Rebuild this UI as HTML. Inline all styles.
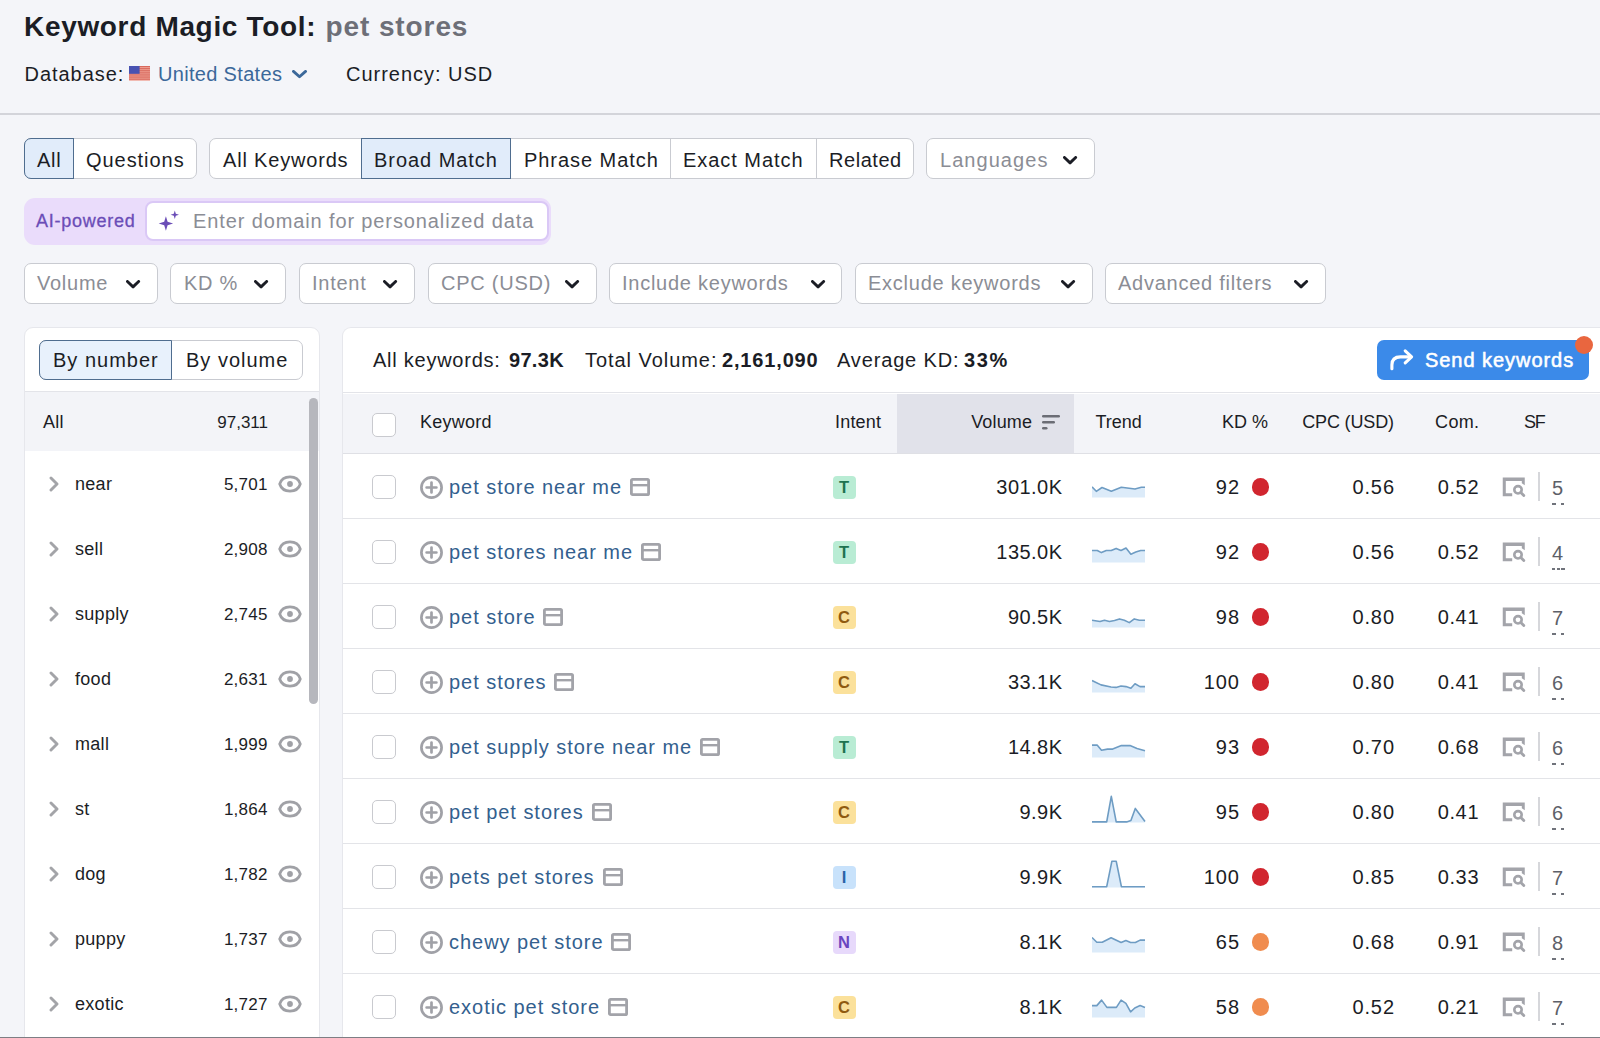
<!DOCTYPE html>
<html><head><meta charset="utf-8"><style>
html,body{margin:0;padding:0}
body{width:1600px;height:1038px;overflow:hidden;position:relative;background:#f4f5f9;font-family:"Liberation Sans", sans-serif;-webkit-font-smoothing:antialiased}
.t{position:absolute;white-space:nowrap;line-height:1;font-family:"Liberation Sans", sans-serif}
.b{position:absolute}
</style></head><body>
<div class="t" style="left:24px;top:13.30px;font-size:28px;font-weight:700;color:#1b1d25;letter-spacing:0.67px;">Keyword Magic Tool:</div>
<div class="t" style="left:325.5px;top:13.30px;font-size:28px;font-weight:700;color:#6d6f78;letter-spacing:0.9px;">pet stores</div>
<div class="t" style="left:24.5px;top:64.07px;font-size:20px;font-weight:400;color:#1b1d25;letter-spacing:0.96px;">Database:</div>
<svg class="b" style="left:129px;top:66px" width="21" height="15" viewBox="0 0 21 15"><rect x="0" y="0" width="21" height="14.7" fill="#f0a396"/><rect x="0" y="0.00" width="21" height="1.13" fill="#d8695d"/><rect x="0" y="2.10" width="21" height="1.13" fill="#d8695d"/><rect x="0" y="4.20" width="21" height="1.13" fill="#d8695d"/><rect x="0" y="6.30" width="21" height="1.13" fill="#d8695d"/><rect x="0" y="8.40" width="21" height="1.13" fill="#d8695d"/><rect x="0" y="10.50" width="21" height="1.13" fill="#d8695d"/><rect x="0" y="12.60" width="21" height="1.13" fill="#d8695d"/><rect x="0" y="0" width="10.6" height="7.8" fill="#4852b2"/></svg>
<div class="t" style="left:158px;top:64.07px;font-size:20px;font-weight:400;color:#3b689a;letter-spacing:0.32px;">United States</div>
<svg class="b" style="left:292px;top:70px" width="16" height="9.2" viewBox="0 0 16 9.2"><path d="M1.45 1.45 L7.5 6.749999999999999 L13.549999999999999 1.45" fill="none" stroke="#3b689a" stroke-width="2.9" stroke-linecap="round" stroke-linejoin="round"/></svg>
<div class="t" style="left:346px;top:64.07px;font-size:20px;font-weight:400;color:#1b1d25;letter-spacing:0.98px;">Currency: USD</div>
<div class="b" style="left:0px;top:113px;width:1600px;height:1.5px;background:#d3d4da"></div>
<div class="b" style="left:24px;top:138px;width:173px;height:41px;background:#fff;border:1px solid #c9cbd1;border-radius:7px;box-sizing:border-box"></div>
<div class="b" style="left:24px;top:138px;width:50px;height:41px;background:#e1ecfa;border:1.3px solid #4f6d8f;border-radius:7px 0 0 7px;box-sizing:border-box"></div>
<div class="t" style="left:37px;top:149.57px;font-size:20px;font-weight:400;color:#1b1d25;letter-spacing:0.7px;">All</div>
<div class="t" style="left:86px;top:149.57px;font-size:20px;font-weight:400;color:#1b1d25;letter-spacing:0.95px;">Questions</div>
<div class="b" style="left:209px;top:138px;width:705px;height:41px;background:#fff;border:1px solid #c9cbd1;border-radius:7px;box-sizing:border-box"></div>
<div class="t" style="left:223px;top:149.57px;font-size:20px;font-weight:400;color:#1b1d25;letter-spacing:0.82px;">All Keywords</div>
<div class="b" style="left:361px;top:138px;width:150px;height:41px;background:#e1ecfa;border:1.3px solid #4f6d8f;border-radius:0 0 0 0;box-sizing:border-box"></div>
<div class="t" style="left:374px;top:149.57px;font-size:20px;font-weight:400;color:#1b1d25;letter-spacing:0.95px;">Broad Match</div>
<div class="t" style="left:524px;top:149.57px;font-size:20px;font-weight:400;color:#1b1d25;letter-spacing:0.95px;">Phrase Match</div>
<div class="t" style="left:683px;top:149.57px;font-size:20px;font-weight:400;color:#1b1d25;letter-spacing:0.95px;">Exact Match</div>
<div class="t" style="left:829px;top:149.57px;font-size:20px;font-weight:400;color:#1b1d25;letter-spacing:0.55px;">Related</div>
<div class="b" style="left:670px;top:139px;width:1.2000000000000455px;height:39px;background:#c9cbd1"></div>
<div class="b" style="left:815.5px;top:139px;width:1.2000000000000455px;height:39px;background:#c9cbd1"></div>
<div class="b" style="left:73px;top:138px;width:1.2999999999999972px;height:41px;background:#4f6d8f"></div>
<div class="b" style="left:926px;top:138px;width:169px;height:41px;background:#fff;border:1px solid #c9cbd1;border-radius:7px;box-sizing:border-box"></div>
<div class="t" style="left:940px;top:149.57px;font-size:20px;font-weight:400;color:#8b8d95;letter-spacing:1.05px;">Languages</div>
<svg class="b" style="left:1063.4px;top:156.2px" width="15.1" height="9.3" viewBox="0 0 15.1 9.3"><path d="M1.45 1.45 L7.05 6.8500000000000005 L12.649999999999999 1.45" fill="none" stroke="#1b1d25" stroke-width="2.9" stroke-linecap="round" stroke-linejoin="round"/></svg>
<div class="b" style="left:24px;top:197.5px;width:526.5px;height:47.0px;background:#eadcfb;border-radius:11px"></div>
<div class="b" style="left:145px;top:200.5px;width:404px;height:40.0px;background:#fff;border:2px solid #dac8f6;border-radius:8px;box-sizing:border-box"></div>
<div class="t" style="left:36px;top:211.76px;font-size:18px;font-weight:400;color:#6b4db7;letter-spacing:0.75px;-webkit-text-stroke:0.3px #6b4db7">AI-powered</div>
<svg class="b" style="left:156px;top:210px" width="24" height="24" viewBox="0 0 24 24"><path d="M9.9 6.3 L11.6 11.8 L17.1 13.5 L11.6 15.2 L9.9 20.7 L8.2 15.2 L2.7 13.5 L8.2 11.8Z" fill="#6b4db7"/><path d="M18.8 0.6 L19.8 3.8 L23 4.8 L19.8 5.8 L18.8 9 L17.8 5.8 L14.6 4.8 L17.8 3.8Z" fill="#6b4db7"/></svg>
<div class="t" style="left:193px;top:210.57px;font-size:20px;font-weight:400;color:#8b8d95;letter-spacing:0.88px;">Enter domain for personalized data</div>
<div class="b" style="left:24px;top:262.5px;width:134px;height:41.0px;background:#fff;border:1px solid #c9cbd1;border-radius:7px;box-sizing:border-box"></div>
<div class="t" style="left:37px;top:273.07px;font-size:20px;font-weight:400;color:#8b8d95;letter-spacing:0.75px;">Volume</div>
<svg class="b" style="left:126.3px;top:279.8px" width="15.1" height="9.3" viewBox="0 0 15.1 9.3"><path d="M1.45 1.45 L7.05 6.8500000000000005 L12.649999999999999 1.45" fill="none" stroke="#1b1d25" stroke-width="2.9" stroke-linecap="round" stroke-linejoin="round"/></svg>
<div class="b" style="left:170px;top:262.5px;width:116px;height:41.0px;background:#fff;border:1px solid #c9cbd1;border-radius:7px;box-sizing:border-box"></div>
<div class="t" style="left:184px;top:273.07px;font-size:20px;font-weight:400;color:#8b8d95;letter-spacing:0.75px;">KD %</div>
<svg class="b" style="left:254.3px;top:279.8px" width="15.1" height="9.3" viewBox="0 0 15.1 9.3"><path d="M1.45 1.45 L7.05 6.8500000000000005 L12.649999999999999 1.45" fill="none" stroke="#1b1d25" stroke-width="2.9" stroke-linecap="round" stroke-linejoin="round"/></svg>
<div class="b" style="left:299px;top:262.5px;width:116px;height:41.0px;background:#fff;border:1px solid #c9cbd1;border-radius:7px;box-sizing:border-box"></div>
<div class="t" style="left:312px;top:273.07px;font-size:20px;font-weight:400;color:#8b8d95;letter-spacing:0.75px;">Intent</div>
<svg class="b" style="left:382.8px;top:279.8px" width="15.1" height="9.3" viewBox="0 0 15.1 9.3"><path d="M1.45 1.45 L7.05 6.8500000000000005 L12.649999999999999 1.45" fill="none" stroke="#1b1d25" stroke-width="2.9" stroke-linecap="round" stroke-linejoin="round"/></svg>
<div class="b" style="left:428px;top:262.5px;width:169px;height:41.0px;background:#fff;border:1px solid #c9cbd1;border-radius:7px;box-sizing:border-box"></div>
<div class="t" style="left:441px;top:273.07px;font-size:20px;font-weight:400;color:#8b8d95;letter-spacing:0.75px;">CPC (USD)</div>
<svg class="b" style="left:564.8px;top:279.8px" width="15.1" height="9.3" viewBox="0 0 15.1 9.3"><path d="M1.45 1.45 L7.05 6.8500000000000005 L12.649999999999999 1.45" fill="none" stroke="#1b1d25" stroke-width="2.9" stroke-linecap="round" stroke-linejoin="round"/></svg>
<div class="b" style="left:609px;top:262.5px;width:233px;height:41.0px;background:#fff;border:1px solid #c9cbd1;border-radius:7px;box-sizing:border-box"></div>
<div class="t" style="left:622px;top:273.07px;font-size:20px;font-weight:400;color:#8b8d95;letter-spacing:0.75px;">Include keywords</div>
<svg class="b" style="left:810.8px;top:279.8px" width="15.1" height="9.3" viewBox="0 0 15.1 9.3"><path d="M1.45 1.45 L7.05 6.8500000000000005 L12.649999999999999 1.45" fill="none" stroke="#1b1d25" stroke-width="2.9" stroke-linecap="round" stroke-linejoin="round"/></svg>
<div class="b" style="left:855px;top:262.5px;width:238px;height:41.0px;background:#fff;border:1px solid #c9cbd1;border-radius:7px;box-sizing:border-box"></div>
<div class="t" style="left:868px;top:273.07px;font-size:20px;font-weight:400;color:#8b8d95;letter-spacing:0.75px;">Exclude keywords</div>
<svg class="b" style="left:1061.3px;top:279.8px" width="15.1" height="9.3" viewBox="0 0 15.1 9.3"><path d="M1.45 1.45 L7.05 6.8500000000000005 L12.649999999999999 1.45" fill="none" stroke="#1b1d25" stroke-width="2.9" stroke-linecap="round" stroke-linejoin="round"/></svg>
<div class="b" style="left:1105px;top:262.5px;width:221px;height:41.0px;background:#fff;border:1px solid #c9cbd1;border-radius:7px;box-sizing:border-box"></div>
<div class="t" style="left:1118px;top:273.07px;font-size:20px;font-weight:400;color:#8b8d95;letter-spacing:0.75px;">Advanced filters</div>
<svg class="b" style="left:1294.3px;top:279.8px" width="15.1" height="9.3" viewBox="0 0 15.1 9.3"><path d="M1.45 1.45 L7.05 6.8500000000000005 L12.649999999999999 1.45" fill="none" stroke="#1b1d25" stroke-width="2.9" stroke-linecap="round" stroke-linejoin="round"/></svg>
<div class="b" style="left:23.5px;top:327px;width:296.0px;height:713px;background:#fff;border:1px solid #e6e7ec;border-radius:9px 9px 0 0;box-sizing:border-box"></div>
<div class="b" style="left:39px;top:340px;width:264px;height:40px;background:#fff;border:1px solid #c9cbd1;border-radius:7px;box-sizing:border-box"></div>
<div class="b" style="left:39px;top:340px;width:133px;height:40px;background:#e8f1fc;border:1.3px solid #4f6d8f;border-radius:7px 0 0 7px;box-sizing:border-box"></div>
<div class="t" style="left:53px;top:350.07px;font-size:20px;font-weight:400;color:#1b1d25;letter-spacing:1.0px;">By number</div>
<div class="t" style="left:186px;top:350.07px;font-size:20px;font-weight:400;color:#1b1d25;letter-spacing:1.0px;">By volume</div>
<div class="b" style="left:24.5px;top:390.5px;width:294.5px;height:1.3000000000000114px;background:#e3e4e9"></div>
<div class="b" style="left:24.5px;top:391.8px;width:294.5px;height:59.19999999999999px;background:#f3f4f8"></div>
<div class="t" style="left:43px;top:412.76px;font-size:18px;font-weight:400;color:#1b1d25;letter-spacing:0.3px;">All</div>
<div class="t" style="right:1332px;text-align:right;top:413.61px;font-size:17px;font-weight:400;color:#1b1d25;letter-spacing:0px;">97,311</div>
<div class="b" style="left:309px;top:398px;width:9px;height:306px;background:#b6b7bd;border-radius:5px"></div>
<svg class="b" style="left:48.4px;top:476.4px" width="12" height="16" viewBox="0 0 12 16"><path d="M3 2 L9 8 L3 14" fill="none" stroke="#a3a4a8" stroke-width="2.9" stroke-linecap="round" stroke-linejoin="round"/></svg>
<div class="t" style="left:75px;top:475.26px;font-size:18px;font-weight:400;color:#1b1d25;letter-spacing:0.3px;">near</div>
<div class="t" style="right:1332.23px;text-align:right;top:476.11px;font-size:17px;font-weight:400;color:#1b1d25;letter-spacing:0.27px;">5,701</div>
<svg class="b" style="left:278px;top:474px" width="24" height="20" viewBox="0 0 24 20"><path d="M1.7 10 C4.6 0.6 19.4 0.6 22.3 10 C19.4 19.4 4.6 19.4 1.7 10Z" fill="none" stroke="#a0a1a6" stroke-width="2.7" stroke-linejoin="round"/><circle cx="12" cy="10" r="2.9" fill="#a0a1a6"/></svg>
<svg class="b" style="left:48.4px;top:541.4px" width="12" height="16" viewBox="0 0 12 16"><path d="M3 2 L9 8 L3 14" fill="none" stroke="#a3a4a8" stroke-width="2.9" stroke-linecap="round" stroke-linejoin="round"/></svg>
<div class="t" style="left:75px;top:540.26px;font-size:18px;font-weight:400;color:#1b1d25;letter-spacing:0.3px;">sell</div>
<div class="t" style="right:1332.23px;text-align:right;top:541.11px;font-size:17px;font-weight:400;color:#1b1d25;letter-spacing:0.27px;">2,908</div>
<svg class="b" style="left:278px;top:539px" width="24" height="20" viewBox="0 0 24 20"><path d="M1.7 10 C4.6 0.6 19.4 0.6 22.3 10 C19.4 19.4 4.6 19.4 1.7 10Z" fill="none" stroke="#a0a1a6" stroke-width="2.7" stroke-linejoin="round"/><circle cx="12" cy="10" r="2.9" fill="#a0a1a6"/></svg>
<svg class="b" style="left:48.4px;top:606.4px" width="12" height="16" viewBox="0 0 12 16"><path d="M3 2 L9 8 L3 14" fill="none" stroke="#a3a4a8" stroke-width="2.9" stroke-linecap="round" stroke-linejoin="round"/></svg>
<div class="t" style="left:75px;top:605.26px;font-size:18px;font-weight:400;color:#1b1d25;letter-spacing:0.3px;">supply</div>
<div class="t" style="right:1332.23px;text-align:right;top:606.11px;font-size:17px;font-weight:400;color:#1b1d25;letter-spacing:0.27px;">2,745</div>
<svg class="b" style="left:278px;top:604px" width="24" height="20" viewBox="0 0 24 20"><path d="M1.7 10 C4.6 0.6 19.4 0.6 22.3 10 C19.4 19.4 4.6 19.4 1.7 10Z" fill="none" stroke="#a0a1a6" stroke-width="2.7" stroke-linejoin="round"/><circle cx="12" cy="10" r="2.9" fill="#a0a1a6"/></svg>
<svg class="b" style="left:48.4px;top:671.4px" width="12" height="16" viewBox="0 0 12 16"><path d="M3 2 L9 8 L3 14" fill="none" stroke="#a3a4a8" stroke-width="2.9" stroke-linecap="round" stroke-linejoin="round"/></svg>
<div class="t" style="left:75px;top:670.26px;font-size:18px;font-weight:400;color:#1b1d25;letter-spacing:0.3px;">food</div>
<div class="t" style="right:1332.23px;text-align:right;top:671.11px;font-size:17px;font-weight:400;color:#1b1d25;letter-spacing:0.27px;">2,631</div>
<svg class="b" style="left:278px;top:669px" width="24" height="20" viewBox="0 0 24 20"><path d="M1.7 10 C4.6 0.6 19.4 0.6 22.3 10 C19.4 19.4 4.6 19.4 1.7 10Z" fill="none" stroke="#a0a1a6" stroke-width="2.7" stroke-linejoin="round"/><circle cx="12" cy="10" r="2.9" fill="#a0a1a6"/></svg>
<svg class="b" style="left:48.4px;top:736.4px" width="12" height="16" viewBox="0 0 12 16"><path d="M3 2 L9 8 L3 14" fill="none" stroke="#a3a4a8" stroke-width="2.9" stroke-linecap="round" stroke-linejoin="round"/></svg>
<div class="t" style="left:75px;top:735.26px;font-size:18px;font-weight:400;color:#1b1d25;letter-spacing:0.3px;">mall</div>
<div class="t" style="right:1332.23px;text-align:right;top:736.11px;font-size:17px;font-weight:400;color:#1b1d25;letter-spacing:0.27px;">1,999</div>
<svg class="b" style="left:278px;top:734px" width="24" height="20" viewBox="0 0 24 20"><path d="M1.7 10 C4.6 0.6 19.4 0.6 22.3 10 C19.4 19.4 4.6 19.4 1.7 10Z" fill="none" stroke="#a0a1a6" stroke-width="2.7" stroke-linejoin="round"/><circle cx="12" cy="10" r="2.9" fill="#a0a1a6"/></svg>
<svg class="b" style="left:48.4px;top:801.4px" width="12" height="16" viewBox="0 0 12 16"><path d="M3 2 L9 8 L3 14" fill="none" stroke="#a3a4a8" stroke-width="2.9" stroke-linecap="round" stroke-linejoin="round"/></svg>
<div class="t" style="left:75px;top:800.26px;font-size:18px;font-weight:400;color:#1b1d25;letter-spacing:0.3px;">st</div>
<div class="t" style="right:1332.23px;text-align:right;top:801.11px;font-size:17px;font-weight:400;color:#1b1d25;letter-spacing:0.27px;">1,864</div>
<svg class="b" style="left:278px;top:799px" width="24" height="20" viewBox="0 0 24 20"><path d="M1.7 10 C4.6 0.6 19.4 0.6 22.3 10 C19.4 19.4 4.6 19.4 1.7 10Z" fill="none" stroke="#a0a1a6" stroke-width="2.7" stroke-linejoin="round"/><circle cx="12" cy="10" r="2.9" fill="#a0a1a6"/></svg>
<svg class="b" style="left:48.4px;top:866.4px" width="12" height="16" viewBox="0 0 12 16"><path d="M3 2 L9 8 L3 14" fill="none" stroke="#a3a4a8" stroke-width="2.9" stroke-linecap="round" stroke-linejoin="round"/></svg>
<div class="t" style="left:75px;top:865.26px;font-size:18px;font-weight:400;color:#1b1d25;letter-spacing:0.3px;">dog</div>
<div class="t" style="right:1332.23px;text-align:right;top:866.11px;font-size:17px;font-weight:400;color:#1b1d25;letter-spacing:0.27px;">1,782</div>
<svg class="b" style="left:278px;top:864px" width="24" height="20" viewBox="0 0 24 20"><path d="M1.7 10 C4.6 0.6 19.4 0.6 22.3 10 C19.4 19.4 4.6 19.4 1.7 10Z" fill="none" stroke="#a0a1a6" stroke-width="2.7" stroke-linejoin="round"/><circle cx="12" cy="10" r="2.9" fill="#a0a1a6"/></svg>
<svg class="b" style="left:48.4px;top:931.4px" width="12" height="16" viewBox="0 0 12 16"><path d="M3 2 L9 8 L3 14" fill="none" stroke="#a3a4a8" stroke-width="2.9" stroke-linecap="round" stroke-linejoin="round"/></svg>
<div class="t" style="left:75px;top:930.26px;font-size:18px;font-weight:400;color:#1b1d25;letter-spacing:0.3px;">puppy</div>
<div class="t" style="right:1332.23px;text-align:right;top:931.11px;font-size:17px;font-weight:400;color:#1b1d25;letter-spacing:0.27px;">1,737</div>
<svg class="b" style="left:278px;top:929px" width="24" height="20" viewBox="0 0 24 20"><path d="M1.7 10 C4.6 0.6 19.4 0.6 22.3 10 C19.4 19.4 4.6 19.4 1.7 10Z" fill="none" stroke="#a0a1a6" stroke-width="2.7" stroke-linejoin="round"/><circle cx="12" cy="10" r="2.9" fill="#a0a1a6"/></svg>
<svg class="b" style="left:48.4px;top:996.4px" width="12" height="16" viewBox="0 0 12 16"><path d="M3 2 L9 8 L3 14" fill="none" stroke="#a3a4a8" stroke-width="2.9" stroke-linecap="round" stroke-linejoin="round"/></svg>
<div class="t" style="left:75px;top:995.26px;font-size:18px;font-weight:400;color:#1b1d25;letter-spacing:0.3px;">exotic</div>
<div class="t" style="right:1332.23px;text-align:right;top:996.11px;font-size:17px;font-weight:400;color:#1b1d25;letter-spacing:0.27px;">1,727</div>
<svg class="b" style="left:278px;top:994px" width="24" height="20" viewBox="0 0 24 20"><path d="M1.7 10 C4.6 0.6 19.4 0.6 22.3 10 C19.4 19.4 4.6 19.4 1.7 10Z" fill="none" stroke="#a0a1a6" stroke-width="2.7" stroke-linejoin="round"/><circle cx="12" cy="10" r="2.9" fill="#a0a1a6"/></svg>
<div class="b" style="left:342px;top:327px;width:1258px;height:713px;background:#fff;border:1px solid #e6e7ec;border-right:none;border-radius:9px 0 0 0;box-sizing:border-box"></div>
<div class="t" style="left:373px;top:350.07px;font-size:20px;font-weight:400;color:#1b1d25;letter-spacing:0.75px;">All keywords: </div>
<div class="t" style="left:509px;top:350.07px;font-size:20px;font-weight:700;color:#1b1d25;letter-spacing:0.3px;">97.3K</div>
<div class="t" style="left:585px;top:350.07px;font-size:20px;font-weight:400;color:#1b1d25;letter-spacing:0.95px;">Total Volume: </div>
<div class="t" style="left:722px;top:350.07px;font-size:20px;font-weight:700;color:#1b1d25;letter-spacing:0.84px;">2,161,090</div>
<div class="t" style="left:837px;top:350.07px;font-size:20px;font-weight:400;color:#1b1d25;letter-spacing:0.85px;">Average KD: </div>
<div class="t" style="left:964px;top:350.07px;font-size:20px;font-weight:700;color:#1b1d25;letter-spacing:1.6px;">33%</div>
<div class="b" style="left:1377px;top:339.5px;width:212px;height:40.5px;background:#3b8ae9;border-radius:7px"></div>
<svg class="b" style="left:1388px;top:348px" width="26" height="24" viewBox="0 0 26 24"><path d="M3.9 20.8 V17 Q3.9 8.9 12.5 8.9 H22.5" fill="none" stroke="#fff" stroke-width="3.1" stroke-linecap="round"/><path d="M17.2 2.9 L23.6 8.9 L17.2 14.9" fill="none" stroke="#fff" stroke-width="3.1" stroke-linecap="round" stroke-linejoin="round"/></svg>
<div class="t" style="left:1425px;top:349.57px;font-size:20px;font-weight:400;color:#fff;letter-spacing:0.95px;-webkit-text-stroke:0.55px #fff">Send keywords</div>
<div class="b" style="left:1574.5px;top:336px;width:18px;height:18px;border-radius:50%;background:#e9663f"></div>
<div class="b" style="left:343px;top:392.2px;width:1257px;height:1.3000000000000114px;background:#e3e4e9"></div>
<div class="b" style="left:343px;top:393.5px;width:1257px;height:59.5px;background:#f3f4f8"></div>
<div class="b" style="left:897px;top:393.5px;width:177px;height:59.5px;background:#e1e2ea"></div>
<div class="b" style="left:343px;top:453px;width:1257px;height:1.3000000000000114px;background:#dfe0e5"></div>
<div class="b" style="left:372px;top:413px;width:23.5px;height:23.5px;background:#fff;border:1.3px solid #c9cacf;border-radius:5px;box-sizing:border-box"></div>
<div class="t" style="left:420px;top:413.06px;font-size:18px;font-weight:400;color:#1b1d25;letter-spacing:0.25px;">Keyword</div>
<div class="t" style="left:835px;top:413.06px;font-size:18px;font-weight:400;color:#1b1d25;letter-spacing:0.2px;">Intent</div>
<div class="t" style="right:567.85px;text-align:right;top:413.06px;font-size:18px;font-weight:400;color:#1b1d25;letter-spacing:0.15px;">Volume</div>
<svg class="b" style="left:1041px;top:414px" width="20" height="16" viewBox="0 0 20 16"><rect x="1" y="1" width="18" height="2.6" rx="1.3" fill="#6b6d75"/><rect x="1" y="7" width="13" height="2.6" rx="1.3" fill="#6b6d75"/><rect x="1" y="13" width="5.5" height="2.6" rx="1.3" fill="#6b6d75"/></svg>
<div class="t" style="left:1095.5px;top:413.06px;font-size:18px;font-weight:400;color:#1b1d25;letter-spacing:0px;">Trend</div>
<div class="t" style="right:332px;text-align:right;top:413.06px;font-size:18px;font-weight:400;color:#1b1d25;letter-spacing:0px;">KD %</div>
<div class="t" style="right:206.15px;text-align:right;top:413.06px;font-size:18px;font-weight:400;color:#1b1d25;letter-spacing:-0.15px;">CPC (USD)</div>
<div class="t" style="right:120.7px;text-align:right;top:413.06px;font-size:18px;font-weight:400;color:#1b1d25;letter-spacing:0.3px;">Com.</div>
<div class="t" style="left:1524px;top:413.06px;font-size:18px;font-weight:400;color:#1b1d25;letter-spacing:-1.2px;">SF</div>
<div class="b" style="left:372px;top:475px;width:23.5px;height:23.5px;background:#fff;border:1.3px solid #c9cacf;border-radius:5px;box-sizing:border-box"></div>
<svg class="b" style="left:419px;top:475px" width="25" height="25" viewBox="0 0 25 25"><circle cx="12.5" cy="12.5" r="10.1" fill="none" stroke="#a0a1a7" stroke-width="2.7"/><path d="M12.5 7.6 V17.4 M7.6 12.5 H17.4" stroke="#a0a1a7" stroke-width="2.7" stroke-linecap="round"/></svg>
<div class="t kw" style="left:449px;top:477.07px;font-size:20px;color:#33608e;letter-spacing:0.96px">pet store near me<svg style="display:inline-block;vertical-align:-2px;margin-left:8px" width="20" height="18" viewBox="0 0 20 18"><rect x="1.4" y="1.4" width="17.2" height="15.2" rx="1.2" fill="none" stroke="#a2a3a9" stroke-width="2.8"/><path d="M1.5 7.2 H18.5" stroke="#a2a3a9" stroke-width="2.4"/></svg></div>
<div class="b" style="left:832.5px;top:475.5px;width:23px;height:23px;border-radius:4px;background:#b9ecd4;color:#1f7250;font-weight:700;font-size:16.5px;line-height:23px;text-align:center;font-family:"Liberation Sans", sans-serif">T</div>
<div class="t" style="right:537.55px;text-align:right;top:477.07px;font-size:20px;font-weight:400;color:#1b1d25;letter-spacing:0.45px;">301.0K</div>
<svg class="b" style="left:1092px;top:467px" width="54" height="32" viewBox="0 -12 54 32"><polygon points="0,18.5 0.0,7.9 4.3,12.3 10.0,8.5 19.3,12.3 29.3,8.3 43.0,10.0 49.3,8.3 53.0,8.3 53,18.5" fill="#dcebf9"/><polyline points="0.0,7.9 4.3,12.3 10.0,8.5 19.3,12.3 29.3,8.3 43.0,10.0 49.3,8.3 53.0,8.3" fill="none" stroke="#6e9cc3" stroke-width="1.6" stroke-linejoin="round"/></svg>
<div class="t" style="right:360.1px;text-align:right;top:477.07px;font-size:20px;font-weight:400;color:#1b1d25;letter-spacing:0.9px;">92</div>
<div class="b" style="left:1251.5px;top:478px;width:17.5px;height:17.5px;border-radius:50%;background:#d1262f"></div>
<div class="t" style="right:205.1px;text-align:right;top:477.07px;font-size:20px;font-weight:400;color:#1b1d25;letter-spacing:0.9px;">0.56</div>
<div class="t" style="right:120.85px;text-align:right;top:477.07px;font-size:20px;font-weight:400;color:#1b1d25;letter-spacing:0.65px;">0.52</div>
<svg class="b" style="left:1502px;top:477px" width="24" height="20" viewBox="0 0 24 20"><path d="M0.75 0.5 H22.75 V8.2 L19.8 6.2 V3.9 H3.8 V16.2 H10.2 V19.2 H0.75Z" fill="#a3a4aa"/><circle cx="16" cy="12.8" r="3.7" fill="none" stroke="#a3a4aa" stroke-width="2.6"/><path d="M18.8 15.6 L21.8 18.6" stroke="#a3a4aa" stroke-width="2.8" stroke-linecap="round"/></svg>
<div class="b" style="left:1538.3px;top:472px;width:1.5px;height:29px;background:#d6d7db"></div>
<div class="t" style="left:1552px;top:478.07px;font-size:20px;font-weight:400;color:#5d6068;letter-spacing:0px;">5</div>
<div class="b" style="left:1551.8px;top:503px;width:3.7999999999999545px;height:1.6000000000000227px;background:#70737b"></div>
<div class="b" style="left:1560.5px;top:503px;width:3.7999999999999545px;height:1.6000000000000227px;background:#70737b"></div>
<div class="b" style="left:343px;top:518px;width:1257px;height:1.2999999999999545px;background:#e3e4e8"></div>
<div class="b" style="left:372px;top:540px;width:23.5px;height:23.5px;background:#fff;border:1.3px solid #c9cacf;border-radius:5px;box-sizing:border-box"></div>
<svg class="b" style="left:419px;top:540px" width="25" height="25" viewBox="0 0 25 25"><circle cx="12.5" cy="12.5" r="10.1" fill="none" stroke="#a0a1a7" stroke-width="2.7"/><path d="M12.5 7.6 V17.4 M7.6 12.5 H17.4" stroke="#a0a1a7" stroke-width="2.7" stroke-linecap="round"/></svg>
<div class="t kw" style="left:449px;top:542.07px;font-size:20px;color:#33608e;letter-spacing:0.96px">pet stores near me<svg style="display:inline-block;vertical-align:-2px;margin-left:8px" width="20" height="18" viewBox="0 0 20 18"><rect x="1.4" y="1.4" width="17.2" height="15.2" rx="1.2" fill="none" stroke="#a2a3a9" stroke-width="2.8"/><path d="M1.5 7.2 H18.5" stroke="#a2a3a9" stroke-width="2.4"/></svg></div>
<div class="b" style="left:832.5px;top:540.5px;width:23px;height:23px;border-radius:4px;background:#b9ecd4;color:#1f7250;font-weight:700;font-size:16.5px;line-height:23px;text-align:center;font-family:"Liberation Sans", sans-serif">T</div>
<div class="t" style="right:537.55px;text-align:right;top:542.07px;font-size:20px;font-weight:400;color:#1b1d25;letter-spacing:0.45px;">135.0K</div>
<svg class="b" style="left:1092px;top:532px" width="54" height="32" viewBox="0 -12 54 32"><polygon points="0,18.5 0.0,6.5 5.3,6.5 9.4,8.6 14.3,6.5 19.2,6.5 24.1,4.4 29.0,6.5 34.0,4.0 38.9,10.3 43.8,8.1 48.7,6.5 53.0,6.5 53,18.5" fill="#dcebf9"/><polyline points="0.0,6.5 5.3,6.5 9.4,8.6 14.3,6.5 19.2,6.5 24.1,4.4 29.0,6.5 34.0,4.0 38.9,10.3 43.8,8.1 48.7,6.5 53.0,6.5" fill="none" stroke="#6e9cc3" stroke-width="1.6" stroke-linejoin="round"/></svg>
<div class="t" style="right:360.1px;text-align:right;top:542.07px;font-size:20px;font-weight:400;color:#1b1d25;letter-spacing:0.9px;">92</div>
<div class="b" style="left:1251.5px;top:543px;width:17.5px;height:17.5px;border-radius:50%;background:#d1262f"></div>
<div class="t" style="right:205.1px;text-align:right;top:542.07px;font-size:20px;font-weight:400;color:#1b1d25;letter-spacing:0.9px;">0.56</div>
<div class="t" style="right:120.85px;text-align:right;top:542.07px;font-size:20px;font-weight:400;color:#1b1d25;letter-spacing:0.65px;">0.52</div>
<svg class="b" style="left:1502px;top:542px" width="24" height="20" viewBox="0 0 24 20"><path d="M0.75 0.5 H22.75 V8.2 L19.8 6.2 V3.9 H3.8 V16.2 H10.2 V19.2 H0.75Z" fill="#a3a4aa"/><circle cx="16" cy="12.8" r="3.7" fill="none" stroke="#a3a4aa" stroke-width="2.6"/><path d="M18.8 15.6 L21.8 18.6" stroke="#a3a4aa" stroke-width="2.8" stroke-linecap="round"/></svg>
<div class="b" style="left:1538.3px;top:537px;width:1.5px;height:29px;background:#d6d7db"></div>
<div class="t" style="left:1552px;top:543.07px;font-size:20px;font-weight:400;color:#5d6068;letter-spacing:0px;">4</div>
<div class="b" style="left:1551.5px;top:568px;width:3.5px;height:1.5px;background:#70737b"></div>
<div class="b" style="left:1556.5px;top:568px;width:3.5px;height:1.5px;background:#70737b"></div>
<div class="b" style="left:1561.3px;top:568px;width:3.5px;height:1.5px;background:#70737b"></div>
<div class="b" style="left:343px;top:583px;width:1257px;height:1.2999999999999545px;background:#e3e4e8"></div>
<div class="b" style="left:372px;top:605px;width:23.5px;height:23.5px;background:#fff;border:1.3px solid #c9cacf;border-radius:5px;box-sizing:border-box"></div>
<svg class="b" style="left:419px;top:605px" width="25" height="25" viewBox="0 0 25 25"><circle cx="12.5" cy="12.5" r="10.1" fill="none" stroke="#a0a1a7" stroke-width="2.7"/><path d="M12.5 7.6 V17.4 M7.6 12.5 H17.4" stroke="#a0a1a7" stroke-width="2.7" stroke-linecap="round"/></svg>
<div class="t kw" style="left:449px;top:607.07px;font-size:20px;color:#33608e;letter-spacing:0.96px">pet store<svg style="display:inline-block;vertical-align:-2px;margin-left:8px" width="20" height="18" viewBox="0 0 20 18"><rect x="1.4" y="1.4" width="17.2" height="15.2" rx="1.2" fill="none" stroke="#a2a3a9" stroke-width="2.8"/><path d="M1.5 7.2 H18.5" stroke="#a2a3a9" stroke-width="2.4"/></svg></div>
<div class="b" style="left:832.5px;top:605.5px;width:23px;height:23px;border-radius:4px;background:#fbe19b;color:#8f5a10;font-weight:700;font-size:16.5px;line-height:23px;text-align:center;font-family:"Liberation Sans", sans-serif">C</div>
<div class="t" style="right:537.55px;text-align:right;top:607.07px;font-size:20px;font-weight:400;color:#1b1d25;letter-spacing:0.45px;">90.5K</div>
<svg class="b" style="left:1092px;top:597px" width="54" height="32" viewBox="0 -12 54 32"><polygon points="0,18.5 0.0,11.2 8.0,12.5 12.5,11.2 17.5,12.5 22.5,11.5 27.5,9.9 32.3,11.2 37.3,13.6 42.3,9.9 47.3,11.2 53.0,11.2 53,18.5" fill="#dcebf9"/><polyline points="0.0,11.2 8.0,12.5 12.5,11.2 17.5,12.5 22.5,11.5 27.5,9.9 32.3,11.2 37.3,13.6 42.3,9.9 47.3,11.2 53.0,11.2" fill="none" stroke="#6e9cc3" stroke-width="1.6" stroke-linejoin="round"/></svg>
<div class="t" style="right:360.1px;text-align:right;top:607.07px;font-size:20px;font-weight:400;color:#1b1d25;letter-spacing:0.9px;">98</div>
<div class="b" style="left:1251.5px;top:608px;width:17.5px;height:17.5px;border-radius:50%;background:#d1262f"></div>
<div class="t" style="right:205.1px;text-align:right;top:607.07px;font-size:20px;font-weight:400;color:#1b1d25;letter-spacing:0.9px;">0.80</div>
<div class="t" style="right:120.85px;text-align:right;top:607.07px;font-size:20px;font-weight:400;color:#1b1d25;letter-spacing:0.65px;">0.41</div>
<svg class="b" style="left:1502px;top:607px" width="24" height="20" viewBox="0 0 24 20"><path d="M0.75 0.5 H22.75 V8.2 L19.8 6.2 V3.9 H3.8 V16.2 H10.2 V19.2 H0.75Z" fill="#a3a4aa"/><circle cx="16" cy="12.8" r="3.7" fill="none" stroke="#a3a4aa" stroke-width="2.6"/><path d="M18.8 15.6 L21.8 18.6" stroke="#a3a4aa" stroke-width="2.8" stroke-linecap="round"/></svg>
<div class="b" style="left:1538.3px;top:602px;width:1.5px;height:29px;background:#d6d7db"></div>
<div class="t" style="left:1552px;top:608.07px;font-size:20px;font-weight:400;color:#5d6068;letter-spacing:0px;">7</div>
<div class="b" style="left:1551.8px;top:633px;width:3.7999999999999545px;height:1.6000000000000227px;background:#70737b"></div>
<div class="b" style="left:1560.5px;top:633px;width:3.7999999999999545px;height:1.6000000000000227px;background:#70737b"></div>
<div class="b" style="left:343px;top:648px;width:1257px;height:1.2999999999999545px;background:#e3e4e8"></div>
<div class="b" style="left:372px;top:670px;width:23.5px;height:23.5px;background:#fff;border:1.3px solid #c9cacf;border-radius:5px;box-sizing:border-box"></div>
<svg class="b" style="left:419px;top:670px" width="25" height="25" viewBox="0 0 25 25"><circle cx="12.5" cy="12.5" r="10.1" fill="none" stroke="#a0a1a7" stroke-width="2.7"/><path d="M12.5 7.6 V17.4 M7.6 12.5 H17.4" stroke="#a0a1a7" stroke-width="2.7" stroke-linecap="round"/></svg>
<div class="t kw" style="left:449px;top:672.07px;font-size:20px;color:#33608e;letter-spacing:0.96px">pet stores<svg style="display:inline-block;vertical-align:-2px;margin-left:8px" width="20" height="18" viewBox="0 0 20 18"><rect x="1.4" y="1.4" width="17.2" height="15.2" rx="1.2" fill="none" stroke="#a2a3a9" stroke-width="2.8"/><path d="M1.5 7.2 H18.5" stroke="#a2a3a9" stroke-width="2.4"/></svg></div>
<div class="b" style="left:832.5px;top:670.5px;width:23px;height:23px;border-radius:4px;background:#fbe19b;color:#8f5a10;font-weight:700;font-size:16.5px;line-height:23px;text-align:center;font-family:"Liberation Sans", sans-serif">C</div>
<div class="t" style="right:537.55px;text-align:right;top:672.07px;font-size:20px;font-weight:400;color:#1b1d25;letter-spacing:0.45px;">33.1K</div>
<svg class="b" style="left:1092px;top:662px" width="54" height="32" viewBox="0 -12 54 32"><polygon points="0,18.5 0.0,6.5 9.0,10.9 19.0,13.0 24.0,13.4 29.0,12.0 34.0,12.6 38.9,14.2 43.0,9.8 48.0,12.6 53.0,12.6 53,18.5" fill="#dcebf9"/><polyline points="0.0,6.5 9.0,10.9 19.0,13.0 24.0,13.4 29.0,12.0 34.0,12.6 38.9,14.2 43.0,9.8 48.0,12.6 53.0,12.6" fill="none" stroke="#6e9cc3" stroke-width="1.6" stroke-linejoin="round"/></svg>
<div class="t" style="right:360.1px;text-align:right;top:672.07px;font-size:20px;font-weight:400;color:#1b1d25;letter-spacing:0.9px;">100</div>
<div class="b" style="left:1251.5px;top:673px;width:17.5px;height:17.5px;border-radius:50%;background:#d1262f"></div>
<div class="t" style="right:205.1px;text-align:right;top:672.07px;font-size:20px;font-weight:400;color:#1b1d25;letter-spacing:0.9px;">0.80</div>
<div class="t" style="right:120.85px;text-align:right;top:672.07px;font-size:20px;font-weight:400;color:#1b1d25;letter-spacing:0.65px;">0.41</div>
<svg class="b" style="left:1502px;top:672px" width="24" height="20" viewBox="0 0 24 20"><path d="M0.75 0.5 H22.75 V8.2 L19.8 6.2 V3.9 H3.8 V16.2 H10.2 V19.2 H0.75Z" fill="#a3a4aa"/><circle cx="16" cy="12.8" r="3.7" fill="none" stroke="#a3a4aa" stroke-width="2.6"/><path d="M18.8 15.6 L21.8 18.6" stroke="#a3a4aa" stroke-width="2.8" stroke-linecap="round"/></svg>
<div class="b" style="left:1538.3px;top:667px;width:1.5px;height:29px;background:#d6d7db"></div>
<div class="t" style="left:1552px;top:673.07px;font-size:20px;font-weight:400;color:#5d6068;letter-spacing:0px;">6</div>
<div class="b" style="left:1551.8px;top:698px;width:3.7999999999999545px;height:1.6000000000000227px;background:#70737b"></div>
<div class="b" style="left:1560.5px;top:698px;width:3.7999999999999545px;height:1.6000000000000227px;background:#70737b"></div>
<div class="b" style="left:343px;top:713px;width:1257px;height:1.2999999999999545px;background:#e3e4e8"></div>
<div class="b" style="left:372px;top:735px;width:23.5px;height:23.5px;background:#fff;border:1.3px solid #c9cacf;border-radius:5px;box-sizing:border-box"></div>
<svg class="b" style="left:419px;top:735px" width="25" height="25" viewBox="0 0 25 25"><circle cx="12.5" cy="12.5" r="10.1" fill="none" stroke="#a0a1a7" stroke-width="2.7"/><path d="M12.5 7.6 V17.4 M7.6 12.5 H17.4" stroke="#a0a1a7" stroke-width="2.7" stroke-linecap="round"/></svg>
<div class="t kw" style="left:449px;top:737.07px;font-size:20px;color:#33608e;letter-spacing:0.96px">pet supply store near me<svg style="display:inline-block;vertical-align:-2px;margin-left:8px" width="20" height="18" viewBox="0 0 20 18"><rect x="1.4" y="1.4" width="17.2" height="15.2" rx="1.2" fill="none" stroke="#a2a3a9" stroke-width="2.8"/><path d="M1.5 7.2 H18.5" stroke="#a2a3a9" stroke-width="2.4"/></svg></div>
<div class="b" style="left:832.5px;top:735.5px;width:23px;height:23px;border-radius:4px;background:#b9ecd4;color:#1f7250;font-weight:700;font-size:16.5px;line-height:23px;text-align:center;font-family:"Liberation Sans", sans-serif">T</div>
<div class="t" style="right:537.55px;text-align:right;top:737.07px;font-size:20px;font-weight:400;color:#1b1d25;letter-spacing:0.45px;">14.8K</div>
<svg class="b" style="left:1092px;top:727px" width="54" height="32" viewBox="0 -12 54 32"><polygon points="0,18.5 0.0,6.1 5.1,6.1 9.5,11.3 15.5,10.1 20.7,10.1 29.4,6.6 38.0,6.6 45.0,9.6 53.0,11.8 53,18.5" fill="#dcebf9"/><polyline points="0.0,6.1 5.1,6.1 9.5,11.3 15.5,10.1 20.7,10.1 29.4,6.6 38.0,6.6 45.0,9.6 53.0,11.8" fill="none" stroke="#6e9cc3" stroke-width="1.6" stroke-linejoin="round"/></svg>
<div class="t" style="right:360.1px;text-align:right;top:737.07px;font-size:20px;font-weight:400;color:#1b1d25;letter-spacing:0.9px;">93</div>
<div class="b" style="left:1251.5px;top:738px;width:17.5px;height:17.5px;border-radius:50%;background:#d1262f"></div>
<div class="t" style="right:205.1px;text-align:right;top:737.07px;font-size:20px;font-weight:400;color:#1b1d25;letter-spacing:0.9px;">0.70</div>
<div class="t" style="right:120.85px;text-align:right;top:737.07px;font-size:20px;font-weight:400;color:#1b1d25;letter-spacing:0.65px;">0.68</div>
<svg class="b" style="left:1502px;top:737px" width="24" height="20" viewBox="0 0 24 20"><path d="M0.75 0.5 H22.75 V8.2 L19.8 6.2 V3.9 H3.8 V16.2 H10.2 V19.2 H0.75Z" fill="#a3a4aa"/><circle cx="16" cy="12.8" r="3.7" fill="none" stroke="#a3a4aa" stroke-width="2.6"/><path d="M18.8 15.6 L21.8 18.6" stroke="#a3a4aa" stroke-width="2.8" stroke-linecap="round"/></svg>
<div class="b" style="left:1538.3px;top:732px;width:1.5px;height:29px;background:#d6d7db"></div>
<div class="t" style="left:1552px;top:738.07px;font-size:20px;font-weight:400;color:#5d6068;letter-spacing:0px;">6</div>
<div class="b" style="left:1551.8px;top:763px;width:3.7999999999999545px;height:1.6000000000000227px;background:#70737b"></div>
<div class="b" style="left:1560.5px;top:763px;width:3.7999999999999545px;height:1.6000000000000227px;background:#70737b"></div>
<div class="b" style="left:343px;top:778px;width:1257px;height:1.2999999999999545px;background:#e3e4e8"></div>
<div class="b" style="left:372px;top:800px;width:23.5px;height:23.5px;background:#fff;border:1.3px solid #c9cacf;border-radius:5px;box-sizing:border-box"></div>
<svg class="b" style="left:419px;top:800px" width="25" height="25" viewBox="0 0 25 25"><circle cx="12.5" cy="12.5" r="10.1" fill="none" stroke="#a0a1a7" stroke-width="2.7"/><path d="M12.5 7.6 V17.4 M7.6 12.5 H17.4" stroke="#a0a1a7" stroke-width="2.7" stroke-linecap="round"/></svg>
<div class="t kw" style="left:449px;top:802.07px;font-size:20px;color:#33608e;letter-spacing:0.96px">pet pet stores<svg style="display:inline-block;vertical-align:-2px;margin-left:8px" width="20" height="18" viewBox="0 0 20 18"><rect x="1.4" y="1.4" width="17.2" height="15.2" rx="1.2" fill="none" stroke="#a2a3a9" stroke-width="2.8"/><path d="M1.5 7.2 H18.5" stroke="#a2a3a9" stroke-width="2.4"/></svg></div>
<div class="b" style="left:832.5px;top:800.5px;width:23px;height:23px;border-radius:4px;background:#fbe19b;color:#8f5a10;font-weight:700;font-size:16.5px;line-height:23px;text-align:center;font-family:"Liberation Sans", sans-serif">C</div>
<div class="t" style="right:537.55px;text-align:right;top:802.07px;font-size:20px;font-weight:400;color:#1b1d25;letter-spacing:0.45px;">9.9K</div>
<svg class="b" style="left:1092px;top:792px" width="54" height="32" viewBox="0 -12 54 32"><polygon points="0,18.5 0.0,17.9 14.7,17.9 19.3,-7.7 24.2,17.9 34.6,17.9 38.9,16.5 43.3,4.4 53.0,17.4 53,18.5" fill="#dcebf9"/><polyline points="0.0,17.9 14.7,17.9 19.3,-7.7 24.2,17.9 34.6,17.9 38.9,16.5 43.3,4.4 53.0,17.4" fill="none" stroke="#6e9cc3" stroke-width="1.6" stroke-linejoin="round"/></svg>
<div class="t" style="right:360.1px;text-align:right;top:802.07px;font-size:20px;font-weight:400;color:#1b1d25;letter-spacing:0.9px;">95</div>
<div class="b" style="left:1251.5px;top:803px;width:17.5px;height:17.5px;border-radius:50%;background:#d1262f"></div>
<div class="t" style="right:205.1px;text-align:right;top:802.07px;font-size:20px;font-weight:400;color:#1b1d25;letter-spacing:0.9px;">0.80</div>
<div class="t" style="right:120.85px;text-align:right;top:802.07px;font-size:20px;font-weight:400;color:#1b1d25;letter-spacing:0.65px;">0.41</div>
<svg class="b" style="left:1502px;top:802px" width="24" height="20" viewBox="0 0 24 20"><path d="M0.75 0.5 H22.75 V8.2 L19.8 6.2 V3.9 H3.8 V16.2 H10.2 V19.2 H0.75Z" fill="#a3a4aa"/><circle cx="16" cy="12.8" r="3.7" fill="none" stroke="#a3a4aa" stroke-width="2.6"/><path d="M18.8 15.6 L21.8 18.6" stroke="#a3a4aa" stroke-width="2.8" stroke-linecap="round"/></svg>
<div class="b" style="left:1538.3px;top:797px;width:1.5px;height:29px;background:#d6d7db"></div>
<div class="t" style="left:1552px;top:803.07px;font-size:20px;font-weight:400;color:#5d6068;letter-spacing:0px;">6</div>
<div class="b" style="left:1551.8px;top:828px;width:3.7999999999999545px;height:1.6000000000000227px;background:#70737b"></div>
<div class="b" style="left:1560.5px;top:828px;width:3.7999999999999545px;height:1.6000000000000227px;background:#70737b"></div>
<div class="b" style="left:343px;top:843px;width:1257px;height:1.2999999999999545px;background:#e3e4e8"></div>
<div class="b" style="left:372px;top:865px;width:23.5px;height:23.5px;background:#fff;border:1.3px solid #c9cacf;border-radius:5px;box-sizing:border-box"></div>
<svg class="b" style="left:419px;top:865px" width="25" height="25" viewBox="0 0 25 25"><circle cx="12.5" cy="12.5" r="10.1" fill="none" stroke="#a0a1a7" stroke-width="2.7"/><path d="M12.5 7.6 V17.4 M7.6 12.5 H17.4" stroke="#a0a1a7" stroke-width="2.7" stroke-linecap="round"/></svg>
<div class="t kw" style="left:449px;top:867.07px;font-size:20px;color:#33608e;letter-spacing:0.96px">pets pet stores<svg style="display:inline-block;vertical-align:-2px;margin-left:8px" width="20" height="18" viewBox="0 0 20 18"><rect x="1.4" y="1.4" width="17.2" height="15.2" rx="1.2" fill="none" stroke="#a2a3a9" stroke-width="2.8"/><path d="M1.5 7.2 H18.5" stroke="#a2a3a9" stroke-width="2.4"/></svg></div>
<div class="b" style="left:832.5px;top:865.5px;width:23px;height:23px;border-radius:4px;background:#c8e2fb;color:#2a63a8;font-weight:700;font-size:16.5px;line-height:23px;text-align:center;font-family:"Liberation Sans", sans-serif">I</div>
<div class="t" style="right:537.55px;text-align:right;top:867.07px;font-size:20px;font-weight:400;color:#1b1d25;letter-spacing:0.45px;">9.9K</div>
<svg class="b" style="left:1092px;top:857px" width="54" height="32" viewBox="0 -12 54 32"><polygon points="0,18.5 0.0,17.7 14.7,17.7 19.9,-7.8 24.2,-7.8 29.4,17.7 53.0,17.7 53,18.5" fill="#dcebf9"/><polyline points="0.0,17.7 14.7,17.7 19.9,-7.8 24.2,-7.8 29.4,17.7 53.0,17.7" fill="none" stroke="#6e9cc3" stroke-width="1.6" stroke-linejoin="round"/></svg>
<div class="t" style="right:360.1px;text-align:right;top:867.07px;font-size:20px;font-weight:400;color:#1b1d25;letter-spacing:0.9px;">100</div>
<div class="b" style="left:1251.5px;top:868px;width:17.5px;height:17.5px;border-radius:50%;background:#d1262f"></div>
<div class="t" style="right:205.1px;text-align:right;top:867.07px;font-size:20px;font-weight:400;color:#1b1d25;letter-spacing:0.9px;">0.85</div>
<div class="t" style="right:120.85px;text-align:right;top:867.07px;font-size:20px;font-weight:400;color:#1b1d25;letter-spacing:0.65px;">0.33</div>
<svg class="b" style="left:1502px;top:867px" width="24" height="20" viewBox="0 0 24 20"><path d="M0.75 0.5 H22.75 V8.2 L19.8 6.2 V3.9 H3.8 V16.2 H10.2 V19.2 H0.75Z" fill="#a3a4aa"/><circle cx="16" cy="12.8" r="3.7" fill="none" stroke="#a3a4aa" stroke-width="2.6"/><path d="M18.8 15.6 L21.8 18.6" stroke="#a3a4aa" stroke-width="2.8" stroke-linecap="round"/></svg>
<div class="b" style="left:1538.3px;top:862px;width:1.5px;height:29px;background:#d6d7db"></div>
<div class="t" style="left:1552px;top:868.07px;font-size:20px;font-weight:400;color:#5d6068;letter-spacing:0px;">7</div>
<div class="b" style="left:1551.8px;top:893px;width:3.7999999999999545px;height:1.6000000000000227px;background:#70737b"></div>
<div class="b" style="left:1560.5px;top:893px;width:3.7999999999999545px;height:1.6000000000000227px;background:#70737b"></div>
<div class="b" style="left:343px;top:908px;width:1257px;height:1.2999999999999545px;background:#e3e4e8"></div>
<div class="b" style="left:372px;top:930px;width:23.5px;height:23.5px;background:#fff;border:1.3px solid #c9cacf;border-radius:5px;box-sizing:border-box"></div>
<svg class="b" style="left:419px;top:930px" width="25" height="25" viewBox="0 0 25 25"><circle cx="12.5" cy="12.5" r="10.1" fill="none" stroke="#a0a1a7" stroke-width="2.7"/><path d="M12.5 7.6 V17.4 M7.6 12.5 H17.4" stroke="#a0a1a7" stroke-width="2.7" stroke-linecap="round"/></svg>
<div class="t kw" style="left:449px;top:932.07px;font-size:20px;color:#33608e;letter-spacing:0.96px">chewy pet store<svg style="display:inline-block;vertical-align:-2px;margin-left:8px" width="20" height="18" viewBox="0 0 20 18"><rect x="1.4" y="1.4" width="17.2" height="15.2" rx="1.2" fill="none" stroke="#a2a3a9" stroke-width="2.8"/><path d="M1.5 7.2 H18.5" stroke="#a2a3a9" stroke-width="2.4"/></svg></div>
<div class="b" style="left:832.5px;top:930.5px;width:23px;height:23px;border-radius:4px;background:#e7d9fb;color:#6a45c0;font-weight:700;font-size:16.5px;line-height:23px;text-align:center;font-family:"Liberation Sans", sans-serif">N</div>
<div class="t" style="right:537.55px;text-align:right;top:932.07px;font-size:20px;font-weight:400;color:#1b1d25;letter-spacing:0.45px;">8.1K</div>
<svg class="b" style="left:1092px;top:922px" width="54" height="32" viewBox="0 -12 54 32"><polygon points="0,18.5 0.0,3.5 4.8,8.2 10.2,8.2 19.1,3.8 29.1,8.5 33.9,6.5 38.6,8.5 43.4,8.5 48.1,6.1 53.0,6.1 53,18.5" fill="#dcebf9"/><polyline points="0.0,3.5 4.8,8.2 10.2,8.2 19.1,3.8 29.1,8.5 33.9,6.5 38.6,8.5 43.4,8.5 48.1,6.1 53.0,6.1" fill="none" stroke="#6e9cc3" stroke-width="1.6" stroke-linejoin="round"/></svg>
<div class="t" style="right:360.1px;text-align:right;top:932.07px;font-size:20px;font-weight:400;color:#1b1d25;letter-spacing:0.9px;">65</div>
<div class="b" style="left:1251.5px;top:933px;width:17.5px;height:17.5px;border-radius:50%;background:#f08c4f"></div>
<div class="t" style="right:205.1px;text-align:right;top:932.07px;font-size:20px;font-weight:400;color:#1b1d25;letter-spacing:0.9px;">0.68</div>
<div class="t" style="right:120.85px;text-align:right;top:932.07px;font-size:20px;font-weight:400;color:#1b1d25;letter-spacing:0.65px;">0.91</div>
<svg class="b" style="left:1502px;top:932px" width="24" height="20" viewBox="0 0 24 20"><path d="M0.75 0.5 H22.75 V8.2 L19.8 6.2 V3.9 H3.8 V16.2 H10.2 V19.2 H0.75Z" fill="#a3a4aa"/><circle cx="16" cy="12.8" r="3.7" fill="none" stroke="#a3a4aa" stroke-width="2.6"/><path d="M18.8 15.6 L21.8 18.6" stroke="#a3a4aa" stroke-width="2.8" stroke-linecap="round"/></svg>
<div class="b" style="left:1538.3px;top:927px;width:1.5px;height:29px;background:#d6d7db"></div>
<div class="t" style="left:1552px;top:933.07px;font-size:20px;font-weight:400;color:#5d6068;letter-spacing:0px;">8</div>
<div class="b" style="left:1551.8px;top:958px;width:3.7999999999999545px;height:1.6000000000000227px;background:#70737b"></div>
<div class="b" style="left:1560.5px;top:958px;width:3.7999999999999545px;height:1.6000000000000227px;background:#70737b"></div>
<div class="b" style="left:343px;top:973px;width:1257px;height:1.2999999999999545px;background:#e3e4e8"></div>
<div class="b" style="left:372px;top:995px;width:23.5px;height:23.5px;background:#fff;border:1.3px solid #c9cacf;border-radius:5px;box-sizing:border-box"></div>
<svg class="b" style="left:419px;top:995px" width="25" height="25" viewBox="0 0 25 25"><circle cx="12.5" cy="12.5" r="10.1" fill="none" stroke="#a0a1a7" stroke-width="2.7"/><path d="M12.5 7.6 V17.4 M7.6 12.5 H17.4" stroke="#a0a1a7" stroke-width="2.7" stroke-linecap="round"/></svg>
<div class="t kw" style="left:449px;top:997.07px;font-size:20px;color:#33608e;letter-spacing:0.96px">exotic pet store<svg style="display:inline-block;vertical-align:-2px;margin-left:8px" width="20" height="18" viewBox="0 0 20 18"><rect x="1.4" y="1.4" width="17.2" height="15.2" rx="1.2" fill="none" stroke="#a2a3a9" stroke-width="2.8"/><path d="M1.5 7.2 H18.5" stroke="#a2a3a9" stroke-width="2.4"/></svg></div>
<div class="b" style="left:832.5px;top:995.5px;width:23px;height:23px;border-radius:4px;background:#fbe19b;color:#8f5a10;font-weight:700;font-size:16.5px;line-height:23px;text-align:center;font-family:"Liberation Sans", sans-serif">C</div>
<div class="t" style="right:537.55px;text-align:right;top:997.07px;font-size:20px;font-weight:400;color:#1b1d25;letter-spacing:0.45px;">8.1K</div>
<svg class="b" style="left:1092px;top:987px" width="54" height="32" viewBox="0 -12 54 32"><polygon points="0,18.5 0.0,6.6 4.8,6.6 9.6,1.1 14.9,8.4 24.4,8.4 29.1,1.1 33.9,4.3 38.6,12.9 42.8,9.0 48.1,6.6 53.0,8.4 53,18.5" fill="#dcebf9"/><polyline points="0.0,6.6 4.8,6.6 9.6,1.1 14.9,8.4 24.4,8.4 29.1,1.1 33.9,4.3 38.6,12.9 42.8,9.0 48.1,6.6 53.0,8.4" fill="none" stroke="#6e9cc3" stroke-width="1.6" stroke-linejoin="round"/></svg>
<div class="t" style="right:360.1px;text-align:right;top:997.07px;font-size:20px;font-weight:400;color:#1b1d25;letter-spacing:0.9px;">58</div>
<div class="b" style="left:1251.5px;top:998px;width:17.5px;height:17.5px;border-radius:50%;background:#f08c4f"></div>
<div class="t" style="right:205.1px;text-align:right;top:997.07px;font-size:20px;font-weight:400;color:#1b1d25;letter-spacing:0.9px;">0.52</div>
<div class="t" style="right:120.85px;text-align:right;top:997.07px;font-size:20px;font-weight:400;color:#1b1d25;letter-spacing:0.65px;">0.21</div>
<svg class="b" style="left:1502px;top:997px" width="24" height="20" viewBox="0 0 24 20"><path d="M0.75 0.5 H22.75 V8.2 L19.8 6.2 V3.9 H3.8 V16.2 H10.2 V19.2 H0.75Z" fill="#a3a4aa"/><circle cx="16" cy="12.8" r="3.7" fill="none" stroke="#a3a4aa" stroke-width="2.6"/><path d="M18.8 15.6 L21.8 18.6" stroke="#a3a4aa" stroke-width="2.8" stroke-linecap="round"/></svg>
<div class="b" style="left:1538.3px;top:992px;width:1.5px;height:29px;background:#d6d7db"></div>
<div class="t" style="left:1552px;top:998.07px;font-size:20px;font-weight:400;color:#5d6068;letter-spacing:0px;">7</div>
<div class="b" style="left:1551.8px;top:1023px;width:3.7999999999999545px;height:1.599999999999909px;background:#70737b"></div>
<div class="b" style="left:1560.5px;top:1023px;width:3.7999999999999545px;height:1.599999999999909px;background:#70737b"></div>
<div class="b" style="left:343px;top:1038px;width:1257px;height:1.2999999999999545px;background:#e3e4e8"></div>
<div class="b" style="left:0px;top:1036.7px;width:1600px;height:1.2999999999999545px;background:#7d7e84"></div>
</body></html>
